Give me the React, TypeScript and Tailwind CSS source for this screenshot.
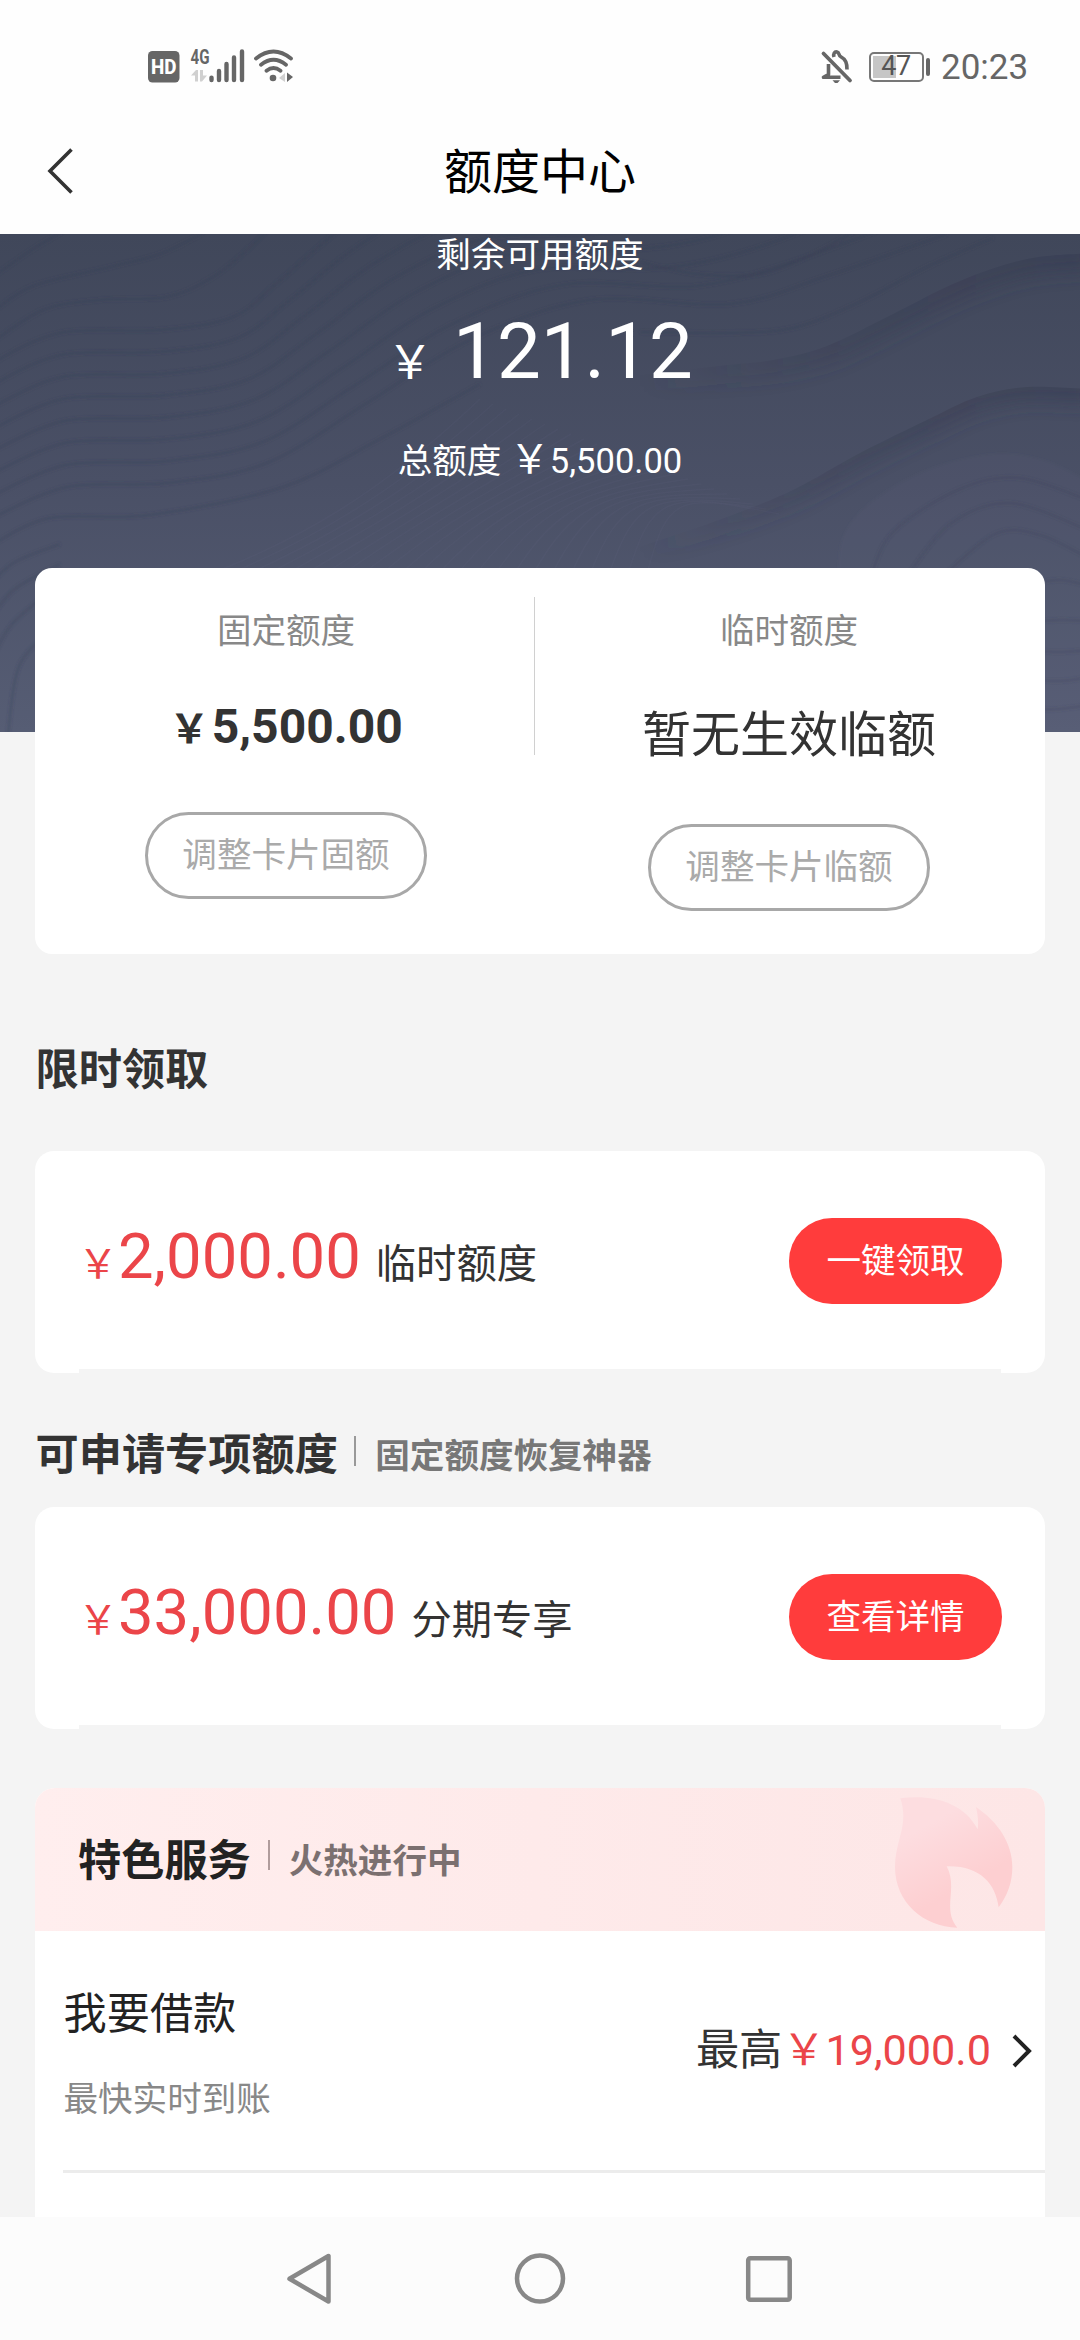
import type { ReactNode } from "react";

function StatusBar() {
  return (
    <div className="flex h-[134px] items-start text-[#666]">
      <svg className="ml-[148px] mt-[40px] h-[44px] w-[148px]" viewBox="148 40 148 44" fill="none">
        <rect x="148" y="51" width="31.5" height="31.5" rx="4.5" fill="#666" />
        <text x="151" y="74.2" fontSize="20.5" fontWeight="800" fill="#fff" fontFamily="Roboto" textLength="25.5" lengthAdjust="spacingAndGlyphs">HD</text>
        <text x="190.6" y="64" fontSize="20.5" fontWeight="700" fill="#666" fontFamily="Roboto" textLength="19" lengthAdjust="spacingAndGlyphs">4G</text>
        <path d="M191 75.500L196 70h2v11.500h-3V75.500zM207 75.500L202 81.500h-2V70h3v5.500z" fill="#d0d0d0" />
        <path d="M211.500 77.600V80M219 71V80M226.500 64V80M234 57.500V80M242 51.500V80" stroke="#666" strokeWidth="4.400" strokeLinecap="round" />
        <path d="M256 58.500Q273.500 44.500 291 58.500M261 64.800Q273.500 54.800 286 64.800M266.500 70.800Q273.500 65.200 280.500 70.800" stroke="#666" strokeWidth="3.800" strokeLinecap="round" />
        <circle cx="273" cy="78" r="3.300" fill="#666" />
        <path d="M279 78L285 73V82z" fill="#d0d0d0" />
        <path d="M287 72.500L293 77L290 79.500L287 82z" fill="#666" />
      </svg>
      <svg className="ml-[524px] mt-[48px] h-[36px] w-[34px]" viewBox="820 48 34 36" fill="none" stroke="#666" strokeWidth="3.600">
        <path d="M823.500 53.500L850 80.500" strokeWidth="3.800" strokeLinecap="round" />
        <path d="M828.500 64V74.500L823.500 77.300H840.500M834 57C833 54 834.500 51.500 837 52C839.500 52.500 838.500 55.500 840.500 56.500C846 59.500 847 63 847 69.500" strokeLinejoin="round" />
        <path d="M832.500 80.300h7.500l-2.500 2.700h-2.500z" fill="#666" stroke="none" />
      </svg>
      <div className="relative ml-[14.500px] mt-[52px] flex h-[29.500px] w-[55px] items-center justify-center rounded-[5px] border-2 border-[#777]">
        <div className="absolute left-[2px] top-[2px] h-[21.500px] w-[23.500px] bg-[#c6c6c6]" />
        <span className="relative text-[27px] leading-none tracking-[-0.5px] text-[#555]">47</span>
      </div>
      <div className="ml-[2px] mt-[58px] h-[18px] w-[4px] rounded-[2px] bg-[#666]" />
      <span className="ml-[11.500px] mt-[50px] text-[35px] leading-[35px]">20:23</span>
    </div>
  );
}

function TitleBar() {
  return (
    <div className="flex h-[100px] items-start">
      <svg className="ml-[46px] mt-[13px] h-[48px] w-[30px]" viewBox="46 147 30 48" fill="none" stroke="#333" strokeWidth="3.600">
        <path d="M71.500 149.500L50 171L71.500 192.500" />
      </svg>
      <div className="ml-[368px] mt-[14px] text-[48px] leading-[50px] text-black">额度中心</div>
    </div>
  );
}

type Point = [number, number];

// Catmull-Rom spline through the given points
function spline(p: Point[]) {
  let d = `M${p[0][0]} ${p[0][1]}`;
  for (let i = 0; i < p.length - 1; i++) {
    const a = p[Math.max(i - 1, 0)];
    const b = p[i];
    const c = p[i + 1];
    const e = p[Math.min(i + 2, p.length - 1)];
    d += ` C${b[0] + (c[0] - a[0]) / 6} ${b[1] + (c[1] - a[1]) / 6} ${c[0] - (e[0] - b[0]) / 6} ${c[1] - (e[1] - b[1]) / 6} ${c[0]} ${c[1]}`;
  }
  return d;
}

function blend(a: Point[], b: Point[], t: number): Point[] {
  return a.map((q, i) => [q[0] + (b[i][0] - q[0]) * t, q[1] + (b[i][1] - q[1]) * t]);
}

const upper: Point[] = [[-10, 130], [60, 99], [160, 96], [233, 83], [277, 49], [337, -2], [400, -40], [480, -55], [560, -50], [640, -90]];
const lower: Point[] = [[-10, 285], [67, 253], [167, 249], [267, 229], [367, 169], [470, 106], [590, 66], [730, 70], [827, 42], [947, 0]];

const contours: Point[][] = [
  [[-10, 45], [30, 17], [62, -2]],
  [[-10, 80], [33, 52], [110, 33], [160, 20], [203, -1]],
  [[-10, 110], [43, 76], [100, 66], [167, 63], [213, 43], [247, 16], [267, -4]],
  [[640, 28], [697, 40], [760, 40], [813, 20], [853, -2]],
  [[640, 98], [727, 99], [793, 94], [860, 68], [927, 33], [993, 4]],
  [[-10, 312], [50, 284], [150, 281], [283, 253], [380, 205], [480, 150]],
  [[-10, 350], [15, 328], [60, 310]],
  [[-10, 385], [15, 355], [60, 330]],
  [[-10, 430], [12, 390], [60, 350]],
  [[8, 500], [20, 430], [60, 390]],
];

const ridges: Point[][] = [
  [[560, 150], [650, 140], [727, 131], [773, 126], [827, 112], [893, 80], [960, 47], [1027, 25], [1090, 19]],
  [[540, 345], [660, 306], [727, 283], [793, 256], [860, 219], [927, 186], [977, 163], [1027, 153], [1090, 155]],
];

const hillTop: Point[] = [[838, 345], [843, 303], [870, 269], [927, 236], [993, 220], [1043, 226], [1090, 248]];

const hills: Point[][] = [
  [[870, 345], [893, 298], [960, 255], [1020, 244], [1090, 267]],
  [[905, 345], [950, 290], [1010, 269], [1090, 297]],
  [[940, 345], [995, 300], [1040, 301], [1090, 325]],
  [[1030, 350], [1060, 346], [1090, 352]],
  [[1030, 388], [1060, 386], [1090, 387]],
  [[1030, 417], [1060, 418], [1090, 416]],
  [[1030, 446], [1060, 447], [1090, 443]],
  [[1030, 476], [1060, 475], [1090, 471]],
];

function Waves() {
  const family = [0, 1, 2, 3, 4, 5, 6, 7].map((i) => spline(blend(upper, lower, i / 7)));
  const fine = Array.from({ length: 24 }, (_, i) => i);
  return (
    <svg className="absolute inset-0 h-full w-full" viewBox="0 0 1080 498" fill="none">
      <defs>
        <filter id="soft" x="-10%" y="-10%" width="120%" height="120%"><feGaussianBlur stdDeviation="1.800" /></filter>
        <filter id="shade" x="-10%" y="-30%" width="120%" height="160%"><feGaussianBlur stdDeviation="9" /></filter>
        <linearGradient id="fade" gradientUnits="userSpaceOnUse" x1="640" y1="0" x2="1080" y2="0">
          <stop offset="0" stopColor="#353a50" stopOpacity="0" />
          <stop offset="0.450" stopColor="#353a50" stopOpacity="0.320" />
          <stop offset="1" stopColor="#353a50" stopOpacity="0.500" />
        </linearGradient>
        <clipPath id="below0"><path d={`${spline(ridges[0])}V498H560z`} /></clipPath>
        <clipPath id="below1"><path d={`${spline(ridges[1])}V498H540z`} /></clipPath>
      </defs>
      <g stroke="#6b7290" strokeOpacity="0.090" strokeWidth="1.500">
        {fine.map((i) => <path key={i} d={`M${210 + i * 19} 340C${300 + i * 16} ${305 - i * 2} ${380 + i * 13} 260 ${480 + i * 13} ${165 + i * 5}`} />)}
      </g>
      <g clipPath="url(#below0)">
        <path d={spline(ridges[0])} stroke="url(#fade)" strokeWidth="36" filter="url(#shade)" />
      </g>
      <g clipPath="url(#below1)">
        <path d={spline(ridges[1])} stroke="url(#fade)" strokeWidth="30" filter="url(#shade)" />
      </g>
      <path d={`${spline(hillTop)}V498H838z`} fill="#68708e" fillOpacity="0.080" filter="url(#soft)" />
      <g filter="url(#soft)" stroke="#343a50" strokeOpacity="0.270" strokeWidth="3">
        {family.map((d) => <path key={d} d={d} />)}
        {contours.map((p) => <path key={p[0].join() + p[1].join()} d={spline(p)} />)}
        {hills.map((p) => <path key={p[0].join()} d={spline(p)} strokeOpacity="0.200" />)}
      </g>
    </svg>
  );
}

function Hero() {
  return (
    <div className="relative h-[498px] bg-gradient-to-b from-[#40475a] via-[#4a5066] to-[#565d74] text-center text-white">
      <Waves />
      <div className="relative">
        <div className="h-[42px] text-[34.560px] leading-[42px]">剩余可用额度</div>
        <div className="mt-[35px] flex h-[82px] items-baseline justify-center leading-[82px]">
          <span className="text-[46px]">￥</span>
          <span className="ml-[20px] text-[78px]">121.12</span>
        </div>
        <div className="mt-[46px] flex h-[42px] items-baseline justify-center text-[34.560px] leading-[42px]">
          <span>总额度</span>
          <span className="ml-[8.500px] text-[40px]">￥</span>
          <span>5,500.00</span>
        </div>
      </div>
    </div>
  );
}

function OutlineButton({ children }: { children: ReactNode }) {
  return (
    <div className="flex h-[87px] w-[282px] items-center justify-center rounded-full border-[3px] border-[#a8a8a8] text-[34.560px] leading-none text-[#aaa]">
      {children}
    </div>
  );
}

function LimitCard() {
  return (
    <div className="relative mx-[35px] -mt-[164px] flex h-[386px] rounded-[17px] bg-white">
      <div className="flex w-[499px] flex-col items-center pl-[3px]">
        <div className="mt-[42px] text-[34.560px] leading-[42px] text-[#888]">固定额度</div>
        <div className="mt-[45px] flex h-[60px] items-baseline font-bold leading-[60px] text-[#333]">
          <span className="text-[40px]">￥</span>
          <span className="ml-[2.500px] text-[48px]">5,500.00</span>
        </div>
        <div className="mt-[55px]"><OutlineButton>调整卡片固额</OutlineButton></div>
      </div>
      <div className="mt-[29px] h-[158px] w-px bg-[#d0d0d0]" />
      <div className="flex flex-1 flex-col items-center pr-[2px]">
        <div className="mt-[42px] text-[34.560px] leading-[42px] text-[#888]">临时额度</div>
        <div className="mt-[54px] text-[49px] leading-[60px] text-[#333]">暂无生效临额</div>
        <div className="mt-[58px]"><OutlineButton>调整卡片临额</OutlineButton></div>
      </div>
    </div>
  );
}

function OfferCard({ amount, label, action }: { amount: string; label: string; action: string }) {
  return (
    <div className="mx-[35px] h-[222px] rounded-[19px] bg-white">
      <div className="flex h-[218px] justify-between pl-[43px] pr-[43px]">
        <div className="mt-[65px] flex h-[80px] items-baseline leading-[80px]">
          <span className="text-[40px] text-[#eb4549]">￥</span>
          <span className="text-[63.360px] text-[#eb4549]">{amount}</span>
          <span className="ml-[15px] text-[40.300px] text-[#333]">{label}</span>
        </div>
        <div className="mt-[67px] flex h-[86px] w-[213px] items-center justify-center rounded-full bg-[#ff3c3c] text-[34.560px] leading-none text-white">
          {action}
        </div>
      </div>
      <div className="mx-[44px] h-[4px] bg-[#f4f4f4]" />
    </div>
  );
}

function Heading({ title, sub }: { title: string; sub?: string }) {
  return (
    <div className="flex h-[56px] items-start font-bold">
      <span className="mt-[1px] text-[43.200px] leading-[56px] text-[#333]">{title}</span>
      {sub && <div className="ml-[16.500px] mt-[9px] h-[30px] w-[2px] bg-[#999]" />}
      {sub && <span className="ml-[19px] mt-[1px] text-[34.560px] leading-[56px] text-[#777]">{sub}</span>}
    </div>
  );
}

function Services() {
  return (
    <div className="mx-[35px] h-[429px] overflow-hidden rounded-t-[20px] bg-white">
      <div className="flex h-[143px] justify-between bg-gradient-to-r from-[#ffeeee] to-[#fde6e6]">
        <div className="ml-[43px] mt-[43px] flex h-[56px] items-start font-bold">
          <span className="mt-[3px] text-[43.200px] leading-[56px] text-[#222]">特色服务</span>
          <div className="ml-[17px] mt-[9px] h-[30px] w-[2px] bg-[#b09c9c]" />
          <span className="ml-[19px] mt-[2px] text-[34.560px] leading-[56px] text-[#7b7070]">火热进行中</span>
        </div>
        <svg className="mr-[32px] mt-[9px] h-[133px] w-[118px]" viewBox="405 115 354 399">
          <defs>
            <linearGradient id="flame" x1="0.200" y1="0" x2="0.700" y2="1">
              <stop offset="0.200" stopColor="#fddde0" />
              <stop offset="0.700" stopColor="#fdcfd1" />
            </linearGradient>
          </defs>
          <path fill="url(#flame)" d="M421 119C510 106 610 128 653 212C656 190 653 165 648 145C715 190 757 255 757 325C757 370 743 410 716 446C707 375 660 320 560 323C595 390 545 450 592 507C490 505 405 430 405 325C405 245 448 200 421 119Z" />
        </svg>
      </div>
      <div className="flex h-[239px] justify-between pl-[28.500px]">
        <div className="flex flex-col">
          <div className="mt-[56px] text-[43.200px] leading-[56px] text-[#222]">我要借款</div>
          <div className="mt-[35px] text-[34.560px] leading-[42px] text-[#888]">最快实时到账</div>
        </div>
        <div className="mr-[12px] mt-[92px] flex h-[56px] items-start text-[43.200px] leading-[56px]">
          <span className="text-[#333]">最高</span>
          <span className="text-[#eb4549]">￥</span>
          <span className="text-[#eb4549]">19,000.0</span>
          <svg className="ml-[20px] mt-[9px] h-[38px] w-[22px]" viewBox="0 0 22 38" fill="none" stroke="#222" strokeWidth="4">
            <path d="M3 4L18 19L3 34" />
          </svg>
        </div>
      </div>
      <div className="ml-[28px] h-[3px] bg-[#ececec]" />
    </div>
  );
}

function NavBar() {
  return (
    <div className="h-[123px] bg-[#fcfcfc]">
      <svg className="h-[123px] w-full" viewBox="0 2217 1080 123" fill="none" stroke="#888" strokeWidth="4.500">
        <path d="M328.500 2256V2301.500L289.500 2278.800Z" strokeLinejoin="round" />
        <circle cx="540" cy="2278.500" r="23" />
        <rect x="748.200" y="2258.200" width="41.500" height="41.500" rx="2" />
      </svg>
    </div>
  );
}

export default function App() {
  return (
    <div className="h-[2340px] w-[1080px] overflow-hidden bg-[#f4f4f4] font-[Roboto,'Noto_Sans_CJK_SC',sans-serif]" lang="zh-CN">
      <div className="bg-[#fefefe]">
        <StatusBar />
        <TitleBar />
      </div>
      <Hero />
      <LimitCard />
      <div className="ml-[35.500px] mt-[88px]"><Heading title="限时领取" /></div>
      <div className="mt-[53px]"><OfferCard amount="2,000.00" label="临时额度" action="一键领取" /></div>
      <div className="ml-[35.500px] mt-[54px]"><Heading title="可申请专项额度" sub="固定额度恢复神器" /></div>
      <div className="mt-[24px]"><OfferCard amount="33,000.00" label="分期专享" action="查看详情" /></div>
      <div className="mt-[59px]"><Services /></div>
      <NavBar />
    </div>
  );
}
